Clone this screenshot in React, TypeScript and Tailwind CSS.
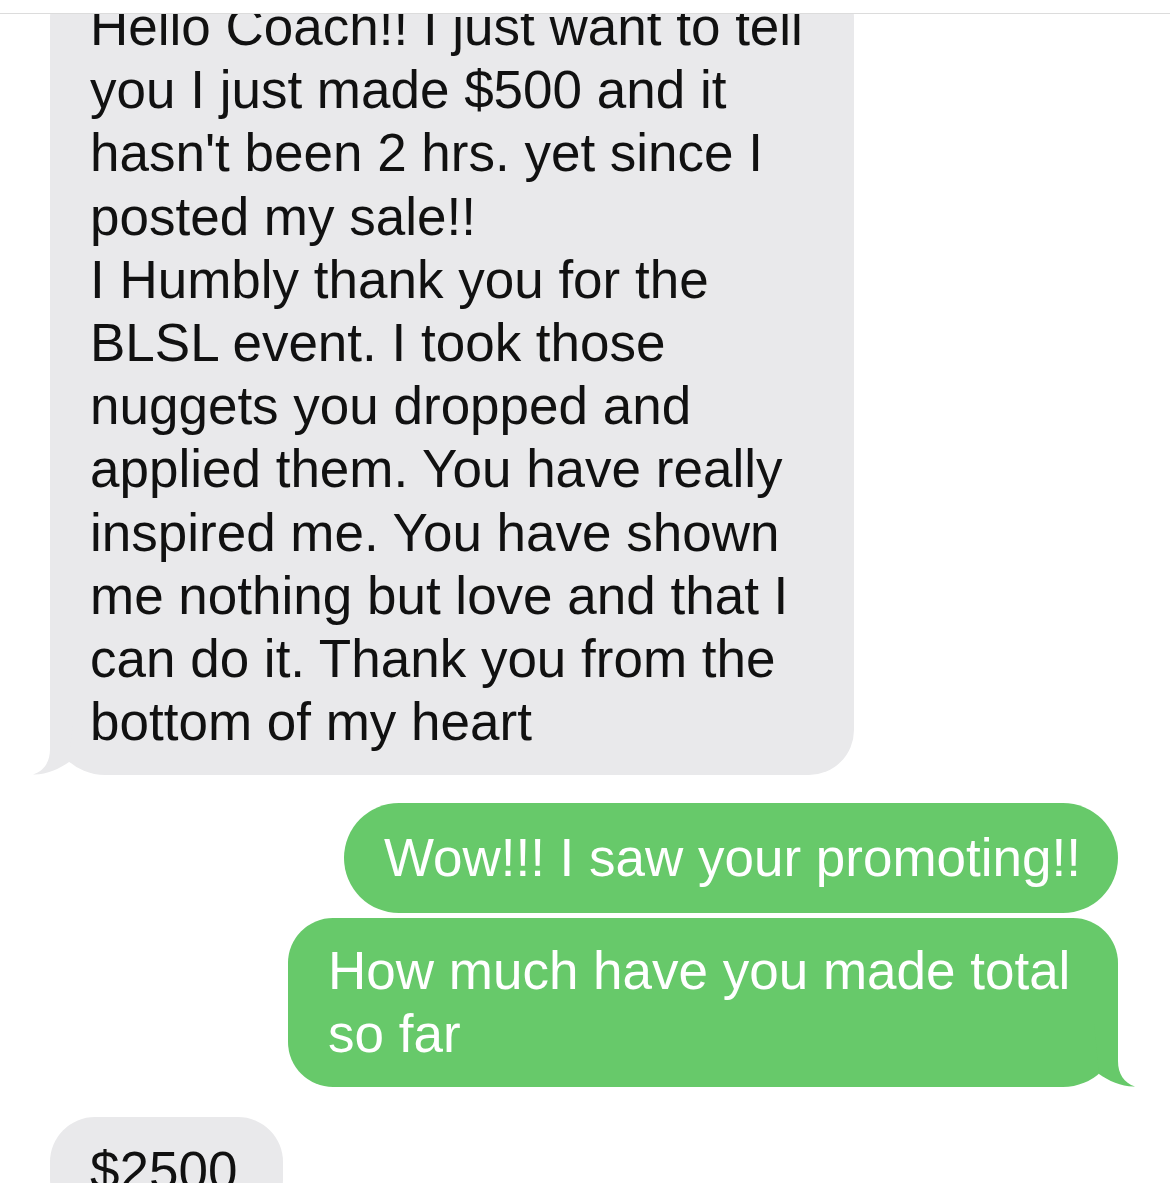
import React from "react";

const GRAY = "#e9e9eb";
const GREEN = "#67c96a";

function Tail({ color, side }: { color: string; side: "left" | "right" }) {
  return (
    <svg
      width="60"
      height="64"
      viewBox="0 -14 60 64"
      className={
        side === "left"
          ? "absolute bottom-0 left-[-20px]"
          : "absolute bottom-0 right-[-20px] scale-x-[-1]"
      }
    >
      <path d="M20,-14 L20,24 C20,37 14,46 3,49.5 C16,50 29,44 39,37 L44,-14 Z" fill={color} />
    </svg>
  );
}

const grayLines = [
  "Hello Coach!! I just want to tell",
  "you I just made $500 and it",
  "hasn't been 2 hrs. yet since I",
  "posted my sale!!",
  "I Humbly thank you for the",
  "BLSL event. I took those",
  "nuggets you dropped and",
  "applied them. You have really",
  "inspired me. You have shown",
  "me nothing but love and that I",
  "can do it. Thank you from the",
  "bottom of my heart",
];

export default function App() {
  return (
    <div
      className="w-[1170px] h-[1204px] bg-white overflow-hidden flex flex-col"
      style={{ fontFamily: '"Liberation Sans", Arial, sans-serif' }}
    >
      <div className="h-[14px] shrink-0 border-b border-[#dcdcdc]" />
      <div className="h-[1169px] shrink-0 overflow-hidden flex flex-col text-[53px] leading-[63.2px]">
        <div className="pl-[50px] mt-[-41px]">
          <div className="relative w-[804px] rounded-[45px] rounded-bl-[55px] bg-[#e9e9eb] pl-[40px] pt-[22px] pb-[22px] text-[#111]">
            {grayLines.map((l, i) => (
              <div key={i} className="whitespace-nowrap">
                {l}
              </div>
            ))}
            <Tail color={GRAY} side="left" />
          </div>
        </div>
        <div className="flex flex-col items-end pr-[52px] mt-[28px] gap-[5px]">
          <div className="rounded-[55px] bg-[#67c96a] pl-[40px] pr-[37px] py-[23px] text-white whitespace-nowrap">
            Wow!!! I saw your promoting!!
          </div>
          <div className="relative w-[830px] rounded-[45px] rounded-br-[55px] bg-[#67c96a] pl-[40px] pt-[21px] pb-[22px] text-white">
            <div className="whitespace-nowrap">How much have you made total</div>
            <div className="whitespace-nowrap">so far</div>
            <Tail color={GREEN} side="right" />
          </div>
        </div>
        <div className="pl-[50px] mt-[30px]">
          <div className="inline-block rounded-[45px] bg-[#e9e9eb] pl-[40px] pr-[46px] pt-[22px] pb-[22px] text-[#111]">
            $2500
          </div>
        </div>
      </div>
    </div>
  );
}
